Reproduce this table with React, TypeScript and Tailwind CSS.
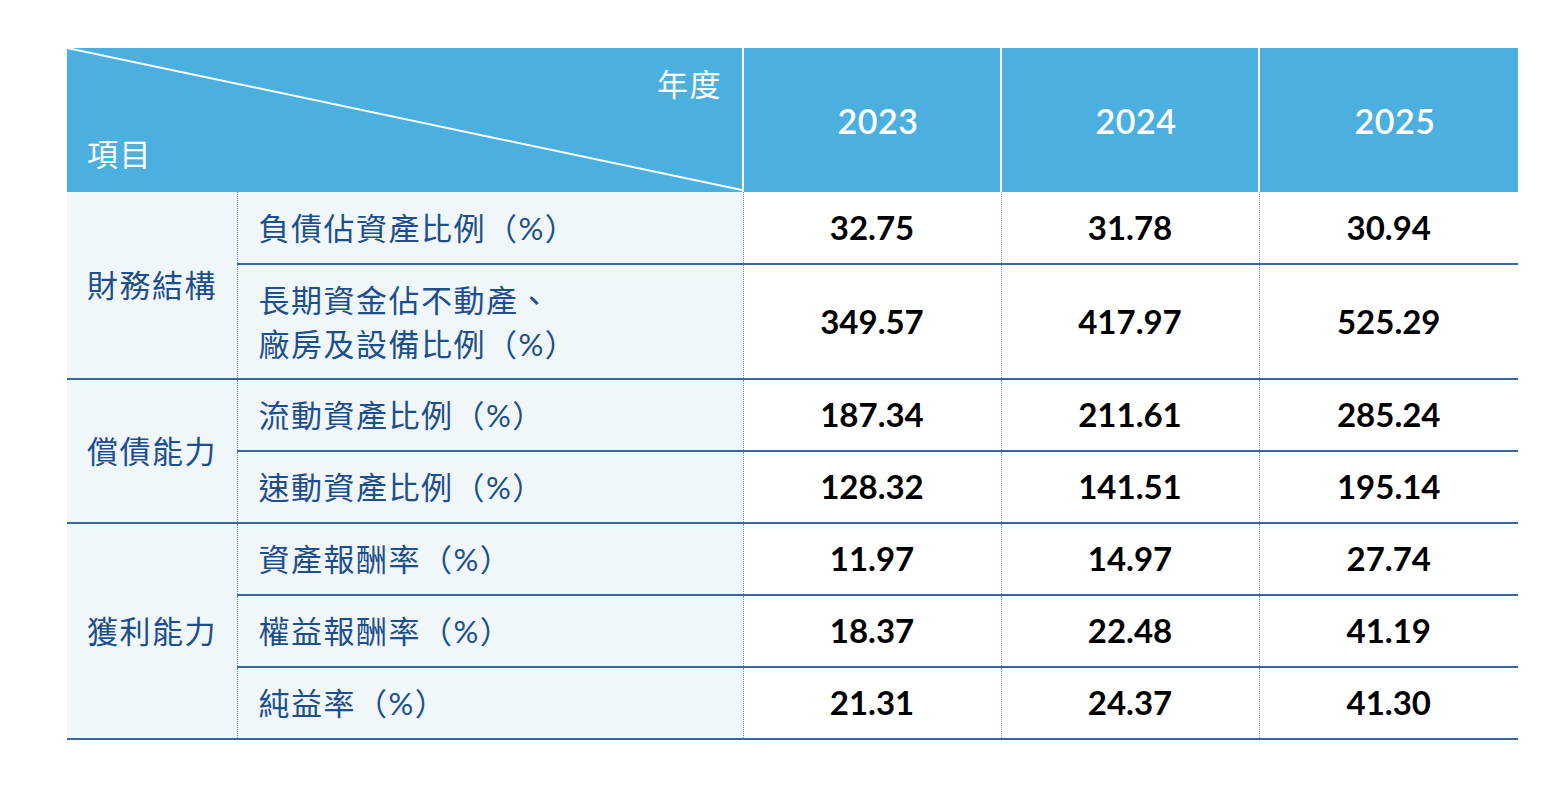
import React from 'react';

type Row = { label: string[]; values: string[] };
type Group = { name: string; rows: Row[] };

const groups: Group[] = [
  {
    name: '財務結構',
    rows: [
      { label: ['負債佔資產比例（%）'], values: ['32.75', '31.78', '30.94'] },
      { label: ['長期資金佔不動產、', '廠房及設備比例（%）'], values: ['349.57', '417.97', '525.29'] },
    ],
  },
  {
    name: '償債能力',
    rows: [
      { label: ['流動資產比例（%）'], values: ['187.34', '211.61', '285.24'] },
      { label: ['速動資產比例（%）'], values: ['128.32', '141.51', '195.14'] },
    ],
  },
  {
    name: '獲利能力',
    rows: [
      { label: ['資產報酬率（%）'], values: ['11.97', '14.97', '27.74'] },
      { label: ['權益報酬率（%）'], values: ['18.37', '22.48', '41.19'] },
      { label: ['純益率（%）'], values: ['21.31', '24.37', '41.30'] },
    ],
  },
];

const years = ['2023', '2024', '2025'];

export default function App() {
  return (
    <div
      className="w-[1556px] h-[790px] bg-white pt-[48px] pl-[67px]"
      style={{ fontFamily: 'Lato, "Noto Sans CJK TC", sans-serif' }}
    >
      <table className="table-fixed border-collapse w-[1451px]">
        <colgroup>
          <col className="w-[170px]" />
          <col className="w-[506px]" />
          <col className="w-[258px]" />
          <col className="w-[258px]" />
          <col className="w-[259px]" />
        </colgroup>
        <thead>
          <tr className="h-[144px] bg-[#4bb0df] text-white">
            {/* diagonal header cell */}
            <th colSpan={2} className="relative p-0 font-normal">
              <svg className="absolute inset-0 w-full h-full" preserveAspectRatio="none" viewBox="0 0 676 144">
                <line x1="0" y1="0" x2="676" y2="142" stroke="white" strokeWidth="2" />
              </svg>
              <div className="relative flex flex-col justify-between h-[144px] pt-[14px] pb-[16px] px-[20px] text-[31px] tracking-[1.5px] leading-[44px]">
                <span className="self-end">年度</span>
                <span className="self-start">項目</span>
              </div>
            </th>
            {years.map(y => (
              <th key={y} className="border-l-2 border-white pl-[12px] text-[34px] font-semibold tracking-[0.5px]">
                {y}
              </th>
            ))}
          </tr>
        </thead>
        <tbody>
          {groups.map(g =>
            g.rows.map((r, i) => (
              <tr
                key={g.name + i}
                className={r.label.length > 1 ? 'h-[115px]' : 'h-[72px]'}
              >
                {i === 0 && (
                  <td
                    rowSpan={g.rows.length}
                    className="bg-[#eff7fb] border-b-2 border-solid border-[#3a67a0] pl-[20px] text-[31px] tracking-[1.5px] text-[#1f4e8c]"
                  >
                    {g.name}
                  </td>
                )}
                <td className="bg-[#eff7fb] border-l border-b-2 border-l-[#7a86b5] border-b-[#3a67a0] [border-left-style:dotted] [border-bottom-style:solid] pl-[21px] text-[31px] leading-[44px] tracking-[1.5px] text-[#1f4e8c]">
                  {r.label.map(l => (
                    <div key={l}>{l}</div>
                  ))}
                </td>
                {r.values.map((v, k) => (
                  <td
                    key={k}
                    className="border-l border-b-2 border-l-[#7a86b5] border-b-[#3a67a0] [border-left-style:dotted] [border-bottom-style:solid] text-center text-[33px] font-bold text-black"
                  >
                    {v}
                  </td>
                ))}
              </tr>
            ))
          )}
        </tbody>
      </table>
    </div>
  );
}
